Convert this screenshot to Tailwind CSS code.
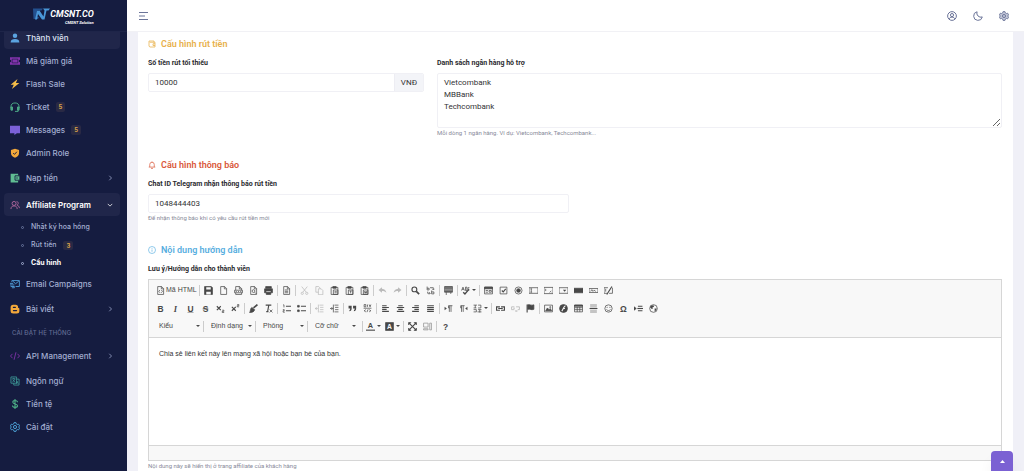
<!DOCTYPE html>
<html lang="vi">
<head>
  <meta charset="UTF-8" />
  <meta name="viewport" content="width=device-width, initial-scale=1.0" />
  <title>Affiliate Program - Cấu hình</title>
  <script src="https://cdn.jsdelivr.net/npm/@tailwindcss/browser@4"></script>
</head>
<body class="flex h-screen overflow-hidden bg-[#f0f0f7] font-['Roboto',sans-serif] text-[8px] text-[#333335]">

  <!-- Sidebar -->
  <aside class="flex w-[127px] shrink-0 flex-col overflow-hidden bg-[#151c40] font-['Inter',sans-serif] text-[8px] font-medium text-[#a3aed1]">
    <a href="#" class="relative z-10 flex h-8 shrink-0 justify-center border-b border-[#1e2549] bg-[#151c40] pt-2">
      <svg class="h-3 w-[17px]" viewBox="0 0 34 24">
        <path d="M0 1h20l-3 4h-7l-2 13h4l-2 4H1z" fill="#23508f"/>
        <path d="M8 6l5-1 8 12 2-12-3-4h14l-3 4h-4l-4 18h-5l-8-11-2 11H4z" fill="#4a97d8"/>
      </svg>
      <span class="font-['Roboto',sans-serif] font-bold text-white italic">
        <span class="block text-[9px] leading-[13px]">CMSNT.CO</span>
        <span class="block text-right text-[4px] leading-[4px]">CMSNT Solution</span>
      </span>
    </a>

    <nav class="-mt-[6px] flex flex-col pr-[7px] pl-1">
      <a href="#" class="flex h-[23px] items-center gap-[6px] rounded bg-[#20264a] pl-[6px] text-[#dfe3f3]">
        <svg class="size-[10px]" viewBox="0 0 16 16" fill="#5ba3e0"><circle cx="8" cy="4.500" r="3.600"/><path d="M1 15c0-4 3-5.500 7-5.500s7 1.500 7 5.500z"/></svg>
        Thành viên
      </a>
      <a href="#" class="flex h-[23px] items-center gap-[6px] pl-[6px]">
        <svg class="size-[10px]" viewBox="0 0 16 16" fill="#8333ad"><path d="M0 2h16v4a2 2 0 0 0 0 4v4H0v-4a2 2 0 0 0 0-4z"/><path d="M3.500 5h9v6h-9z" fill="none" stroke="#151c40"/></svg>
        Mã giảm giá
      </a>
      <a href="#" class="flex h-[23px] items-center gap-[6px] pl-[6px]">
        <svg class="size-[10px]" viewBox="0 0 16 16" fill="#f5bd49"><path d="M12 0L1 9h5L3 16 15 6.500H9.500z"/></svg>
        Flash Sale
      </a>
      <a href="#" class="flex h-[23px] items-center gap-[6px] pl-[6px]">
        <svg class="size-[10px]" viewBox="0 0 16 16" fill="none" stroke="#4ba585" stroke-width="1.600"><path d="M1.500 10V8a6.500 6.500 0 0 1 13 0v2"/><path d="M1.500 8h2.500v5H1.500zM12 8h2.500v5H12z" fill="#4ba585"/><path d="M13 13v2H8"/></svg>
        Ticket
        <span class="rounded-xs bg-[#292944] px-[3px] text-[6px] leading-[10px] font-bold text-[#d7a149]">5</span>
      </a>
      <a href="#" class="flex h-[23px] items-center gap-[6px] pl-[6px]">
        <svg class="size-[10px]" viewBox="0 0 16 16" fill="#7b61d8"><path d="M0 1h16v12h-5l-4 3v-3H0z"/></svg>
        Messages
        <span class="rounded-xs bg-[#292944] px-[3px] text-[6px] leading-[10px] font-bold text-[#d7a149]">5</span>
      </a>
      <a href="#" class="flex h-[23px] items-center gap-[6px] pl-[6px]">
        <svg class="size-[10px]" viewBox="0 0 16 16"><path d="M8 1l6.500 2v5c0 4-3 6-6.500 7.500C4.500 14 1.500 12 1.500 8V3z" fill="#f3a83b"/><path d="M5 8l2.200 2.200L11 6" fill="none" stroke="#151c40" stroke-width="1.500"/></svg>
        Admin Role
      </a>
      <a href="#" class="my-[2px] flex h-[23px] items-center gap-[6px] pr-[7px] pl-[6px]">
        <svg class="size-[10px]" viewBox="0 0 16 16"><path d="M1 1h12v3h2v8h-2v3H1z" fill="#60bd93"/><path d="M15.500 4.500H8v7h7.500M10 8h2.500" fill="none" stroke="#151c40" stroke-width="1.400"/></svg>
        Nạp tiền
        <svg class="ml-auto size-[6px]" viewBox="0 0 8 8" fill="none" stroke="#a3aed1"><path d="M3 1l3 3-3 3"/></svg>
      </a>
      <a href="#" class="my-[2px] flex h-[23px] items-center gap-[6px] rounded bg-[#20264a] pr-[7px] pl-[6px] font-semibold text-white">
        <svg class="size-[10px]" viewBox="0 0 16 16" fill="none" stroke="#b0659c" stroke-width="1.500"><circle cx="6.500" cy="5.500" r="3.200"/><path d="M1.500 14.500c0-3.500 2-5 5-5s5 1.500 5 5M10.500 2.500c3.500 0 3.500 5 .5 5.500 2.500 1 4 2.500 4 5"/></svg>
        Affiliate Program
        <svg class="ml-auto size-[6px]" viewBox="0 0 8 8" fill="none" stroke="#ffffff"><path d="M1 2.500l3 3 3-3"/></svg>
      </a>
      <a href="#" class="flex h-[18px] items-center gap-[7px] pl-[17px] text-[7px]">
        <span class="size-[3px] rounded-full border border-[#69749c]"></span>
        Nhật ký hoa hồng
      </a>
      <a href="#" class="flex h-[18px] items-center gap-[7px] pl-[17px] text-[7px]">
        <span class="size-[3px] rounded-full border border-[#69749c]"></span>
        Rút tiền
        <span class="rounded-xs bg-[#292944] px-[3px] text-[6px] leading-[9px] font-bold text-[#d7a149]">3</span>
      </a>
      <a href="#" class="flex h-[18px] items-center gap-[7px] pl-[17px] text-[7px] font-bold text-white">
        <span class="size-[3px] rounded-full border border-[#a3aed1]"></span>
        Cấu hình
      </a>
      <a href="#" class="flex h-[23px] items-center gap-[6px] pl-[6px]">
        <svg class="size-[10px]" viewBox="0 0 16 16" fill="none" stroke="#4f9ad6" stroke-width="1.500"><path d="M3 5V2.500h12V12H9"/><path d="M4.500 3.500L9 7.500l5-4M0 7h5M0 9.500h7M1 12h6v2H3" /></svg>
        Email Campaigns
      </a>
      <a href="#" class="my-[2px] flex h-[23px] items-center gap-[6px] pr-[7px] pl-[6px]">
        <svg class="size-[10px]" viewBox="0 0 16 16"><path d="M5 1h4a4 4 0 0 1 4 4v1.500h1a1.500 1.500 0 0 1 1 1.500v3a4 4 0 0 1-4 4H5a4 4 0 0 1-4-4V5a4 4 0 0 1 4-4z" fill="#f3a83b"/><path d="M5.500 5.500h3M5.500 10.500h5" stroke="#151c40" stroke-width="2" stroke-linecap="round"/></svg>
        Bài viết
        <svg class="ml-auto size-[6px]" viewBox="0 0 8 8" fill="none" stroke="#a3aed1"><path d="M3 1l3 3-3 3"/></svg>
      </a>
      <p class="flex h-5 items-center pl-2 text-[6px] tracking-wide text-[#636d94] uppercase">Cài đặt hệ thống</p>
      <a href="#" class="my-[2px] flex h-[23px] items-center gap-[6px] pr-[7px] pl-[6px]">
        <svg class="size-[10px]" viewBox="0 0 16 16" fill="none" stroke="#8333ad" stroke-width="1.400"><path d="M4 4.500L.8 8 4 11.500M12 4.500L15.200 8 12 11.500M9.500 2l-3 12"/></svg>
        API Management
        <svg class="ml-auto size-[6px]" viewBox="0 0 8 8" fill="none" stroke="#a3aed1"><path d="M3 1l3 3-3 3"/></svg>
      </a>
      <a href="#" class="flex h-[23px] items-center gap-[6px] pl-[6px]">
        <svg class="size-[10px]" viewBox="0 0 16 16" fill="none" stroke="#3f9c9a" stroke-width="1.300"><path d="M1.500 1.500h9v10h-9zM10.500 5h4v9.500H6v-3"/><path d="M3.500 4.500h5M6 3v1.500M8 4.500c-.5 2-2 3.500-4 4.500M4.500 6c1 1.500 2 2.500 3.500 3M10 12.500l1.500-4 1.500 4"/></svg>
        Ngôn ngữ
      </a>
      <a href="#" class="flex h-[23px] items-center gap-[6px] pl-[6px]">
        <svg class="size-[10px]" viewBox="0 0 16 16" fill="none" stroke="#4fb389" stroke-width="1.700"><path d="M12 5c0-2-2-2.500-4-2.500S4.500 3.500 4.500 5.200C4.500 9 12 7 12 10.800c0 1.700-1.800 2.700-4 2.700s-4-1-4-3M8 0v16"/></svg>
        Tiền tệ
      </a>
      <a href="#" class="flex h-[23px] items-center gap-[6px] pl-[6px]">
        <svg class="size-[10px]" viewBox="0 0 16 16" fill="none" stroke="#4fa8dc" stroke-width="1.500"><path d="M6.500 1h3l.6 2 1.700 1 2-.5 1.500 2.600L13.900 8l1.400 1.900-1.500 2.600-2-.5-1.700 1-.6 2h-3l-.6-2-1.700-1-2 .5L.7 9.900 2.100 8 .7 6.100l1.500-2.600 2 .5 1.700-1z"/><circle cx="8" cy="8" r="2.500"/></svg>
        Cài đặt
      </a>
    </nav>
  </aside>

  <div class="flex min-w-0 flex-1 flex-col">
    <!-- Topbar -->
    <header class="flex h-8 shrink-0 items-center border-b border-[#f1f1f5] bg-white pr-[15px] pl-3 text-[#6b7499]">
      <button aria-label="Menu">
        <svg class="h-[8px] w-[9px]" viewBox="0 0 9 8" fill="none" stroke="currentColor"><path d="M0 .5h9M0 4h6M0 7.500h9"/></svg>
      </button>
      <div class="ml-auto flex gap-4">
        <button aria-label="Tài khoản">
          <svg class="size-[10px]" viewBox="0 0 16 16" fill="none" stroke="currentColor" stroke-width="1.600"><circle cx="8" cy="8" r="7"/><circle cx="8" cy="6.500" r="2.500"/><path d="M3.500 13c.5-2.300 2-3.200 4.500-3.200s4 .9 4.500 3.200"/></svg>
        </button>
        <button aria-label="Giao diện tối">
          <svg class="size-[10px]" viewBox="0 0 16 16" fill="none" stroke="currentColor" stroke-width="1.600"><path d="M6.500 1.200A7 7 0 1 0 14.900 9.500 6.500 6.500 0 0 1 6.500 1.200z"/></svg>
        </button>
        <button aria-label="Thiết lập">
          <svg class="size-[10px]" viewBox="0 0 16 16" fill="#c3c7d8" stroke="currentColor" stroke-width="1.500"><path d="M6.500 1h3l.6 2 1.700 1 2-.5 1.500 2.600L13.900 8l1.400 1.900-1.500 2.600-2-.5-1.700 1-.6 2h-3l-.6-2-1.700-1-2 .5L.7 9.900 2.100 8 .7 6.100l1.500-2.600 2 .5 1.700-1z"/><circle cx="8" cy="8" r="2.500"/></svg>
        </button>
      </div>
    </header>

    <main class="flex-1 overflow-hidden px-[11px]">
      <form class="min-h-full bg-white pt-[5px] pr-[11px] pl-[10px]">
        <h2 class="flex items-center gap-[5px] text-[9px] leading-[14px] font-semibold text-[#e8b04a]">
          <svg class="size-2" viewBox="0 0 16 16" fill="none" stroke="currentColor" stroke-width="1.500"><path d="M2 2h10v2.500M2 2v10.500L4 14h10V4.500H3.500M14 7.500h-4v3.500h4"/></svg>
          Cấu hình rút tiền
        </h2>
        <div class="mt-[7px] grid grid-cols-3 gap-[13px]">
          <div>
            <label for="minAmount" class="block text-[7px] leading-[10px] font-bold text-[#2b2b30]">Số tiền rút tối thiểu</label>
            <div class="mt-[5px] flex h-[19px] overflow-hidden rounded-xs border border-[#f0f0f5]">
              <input id="minAmount" type="text" value="10000" class="min-w-0 flex-1 px-[6px] outline-none" />
              <span class="flex items-center border-l border-[#ededf3] bg-[#f3f4f8] px-[6px]">VNĐ</span>
            </div>
          </div>
          <div class="col-span-2">
            <label for="banks" class="block text-[7px] leading-[10px] font-bold text-[#2b2b30]">Danh sách ngân hàng hỗ trợ</label>
            <textarea id="banks" class="mt-[5px] block h-[55px] w-full resize-y overflow-hidden rounded-xs border border-[#f0f0f5] px-[6px] py-[3px] leading-[12px] outline-none">Vietcombank
MBBank
Techcombank</textarea>
            <p class="mt-px text-[6px] leading-[8px] text-[#878a99]">Mỗi dòng 1 ngân hàng. Ví dụ: Vietcombank, Techcombank...</p>
          </div>
        </div>

        <h2 class="mt-[21px] flex items-center gap-[5px] text-[9px] leading-[14px] font-semibold text-[#d9583a]">
          <svg class="size-2" viewBox="0 0 16 16" fill="none" stroke="currentColor" stroke-width="1.400"><path d="M3.500 12V7a4.500 4.500 0 0 1 9 0v5M1.500 12.200h13M6 14.800h4M8 1v1.500"/></svg>
          Cấu hình thông báo
        </h2>
        <div class="mt-[7px] grid grid-cols-2 gap-[13px]">
          <div>
            <label for="chatId" class="block text-[7px] leading-[10px] font-bold text-[#2b2b30]">Chat ID Telegram nhận thông báo rút tiền</label>
            <input id="chatId" type="text" value="1048444403" class="mt-[5px] block h-[19px] w-full rounded-xs border border-[#f0f0f5] px-[6px] outline-none" />
            <p class="mt-px text-[6px] leading-[8px] text-[#878a99]">Để nhận thông báo khi có yêu cầu rút tiền mới</p>
          </div>
        </div>

        <h2 class="mt-[21px] flex items-center gap-[5px] text-[9px] leading-[14px] font-semibold text-[#57aee0]">
          <svg class="size-2" viewBox="0 0 16 16" fill="none" stroke="currentColor" stroke-width="1.300"><circle cx="8" cy="8" r="7"/><path d="M8 7v4.500M8 4v1.500"/></svg>
          Nội dung hướng dẫn
        </h2>
        <label for="editor" class="mt-[7px] block text-[7px] leading-[10px] font-bold text-[#2b2b30]">Lưu ý/Hướng dẫn cho thành viên</label>

        <!-- Editor -->
        <div class="mt-[5px] border border-[#d6d6d6]">
          <div class="border-b border-[#d6d6d6] bg-[#f8f8f8] px-1 pt-px pb-[2px] font-['Liberation_Sans',sans-serif] text-[7px] text-[#484848]">
            <div id="row1" class="flex h-[18px] items-center"></div>
            <div id="row2" class="flex h-[18px] items-center"></div>
            <div class="flex h-[18px] items-center">
              <div id="combos" class="flex items-center"></div>
              <div id="row3" class="flex items-center"></div>
            </div>
          </div>
          <textarea id="editor" class="block h-[107px] w-full resize-none bg-white px-[10px] py-[10px] font-['Liberation_Sans',sans-serif] text-[7px] leading-[11px] outline-none">Chia sẻ liên kết này lên mạng xã hội hoặc bạn bè của bạn.</textarea>
          <div class="h-[15px] border-t border-[#d6d6d6] bg-[#f8f8f8]"></div>
        </div>
        <p class="mt-px text-[6px] leading-[8px] text-[#878a99]">Nội dung này sẽ hiển thị ở trang affiliate của khách hàng</p>
      </form>
    </main>
  </div>

  <button aria-label="Lên đầu trang" class="fixed right-[11px] bottom-0 flex h-5 w-[22px] items-center justify-center rounded-t bg-[#7b61d3] shadow-lg">
    <svg class="h-[3px] w-[5px]" viewBox="0 0 5 3" fill="#ffffff"><path d="M0 3L2.500 0 5 3z"/></svg>
  </button>

  <script>
    const page = '<path d="M3 1h7l3.500 3.500V15H3z"/><path d="M9.500 1v4h4"/>';
    const clip = '<path d="M2 2.500h12V15H2z"/><path d="M5 1h6v3H5z" fill="currentColor"/>';
    const glyph = (t, extra = "") => `<text x="8" y="13.500" text-anchor="middle" font-size="15" font-weight="bold" fill="currentColor" stroke="none" ${extra}>${t}</text>`;

    const icons = {
      source: page + '<path d="M7 7L5 9.500 7 12M9.500 7l2 2.500-2 2.500"/>',
      save: '<path d="M1 1h12l2 2v12H1z" fill="currentColor"/><path d="M4 2h8v4H4zM4 10h8v5H4z" fill="#f8f8f8" stroke="none"/>',
      newpage: page,
      pdf: page + '<path d="M1 7.500h14v4.500H1z" fill="#f8f8f8"/><path d="M3 9.800h2M7 9.800h2M11 9.800h2"/>',
      preview: page + '<circle cx="8" cy="9" r="2.500"/><path d="M10 11l3 3"/>',
      print: '<path d="M3 1h10v3H3zM1 5h14v7H1zM4 12h8v3H4z" fill="currentColor"/><path d="M4 10h8" stroke="#f8f8f8"/>',
      template: page + '<path d="M5 7h6M5 9.500h6M5 12h6"/>',
      cut: '<path d="M3 1l8 10M13 1L5 11"/><circle cx="4" cy="13" r="2"/><circle cx="12" cy="13" r="2"/>',
      copy: '<path d="M1.500 1h5L9 3.500V11H1.500z"/><path d="M6 5h5l3 3v7.500H6z" fill="#f8f8f8"/>',
      paste: clip + '<path d="M6 7h8v8H6zM8 9.500h4M8 12h4"/>',
      pastetext: clip + '<path d="M6 7h8v8H6zM8 9h4M10 9v4"/>',
      pasteword: clip + '<path d="M6 7h8v8H6zM8 9l1 4 1-3 1 3 1-4"/>',
      undo: '<path d="M7 2L1 7l6 5V9c4 0 6 1 8 3-1-4-3-6-8-7z" fill="currentColor" stroke="none"/>',
      redo: '<path d="M9 2l6 5-6 5V9c-4 0-6 1-8 3 1-4 3-6 8-7z" fill="currentColor" stroke="none"/>',
      find: '<circle cx="6" cy="6" r="4.300" stroke-width="2"/><path d="M9.500 9.500l5 5" stroke-width="3"/>',
      replace: '<path d="M2 1v6h3.500V4H2M10 8v6h4v-3.500h-4M7 3h6v3M11 5l2 2 2-2M3 10v3h4M5.500 11l2 2-2 2"/>',
      selectall: '<path d="M1 1h14v10H1z" fill="currentColor"/><path d="M1 3.500h14M1 6h14M1 8.500h14" stroke="#b5b5b5"/><path d="M4 11v5M12 11v3"/>',
      spell: '<path d="M1 8l2.500-6L6 8M2 6h3M8 2v6h2.500V2zM15 3h-2.500v4H15"/><path d="M4 11l3 3 7-8" stroke-width="2.500"/>',
      form: '<path d="M1 2h14v12H1z"/><path d="M1 2h14v3H1z" fill="currentColor"/><path d="M3 8h4M3 11h4M9 8h4v3H9z"/>',
      checkbox: '<path d="M2 2h12v12H2z"/><path d="M5 8l2.500 2.500L12 5" stroke-width="2"/>',
      radio: '<circle cx="8" cy="8" r="6.300"/><circle cx="8" cy="8" r="3.300" fill="currentColor"/>',
      textfield: '<path d="M0 3h16v10H0zM4 5v6M2.500 5h3M2.500 11h3"/>',
      textarea: '<path d="M0 2.500h16v11H0zM3 5v4M10 11.500l3-3M13 11.500V11"/>',
      select: '<path d="M0 3h16v10H0z"/><path d="M7 6.500h6L10 10z" fill="currentColor" stroke="none"/>',
      button: '<path d="M0 4h16v8H0z" fill="currentColor"/>',
      imgbutton: '<path d="M0 4.500h16v7H0z"/><path d="M3 9.500l2-3 2 3 2-2 3 2"/>',
      hidden: '<path d="M0 3h7M0 3v10h6M9 13h6V3"/><path d="M14 1L5 15" stroke-width="2"/><path d="M3 5v5"/>',
      bold: glyph("B"),
      italic: glyph("I", 'font-style="italic" font-family="Liberation Serif"'),
      underline: glyph("U", 'text-decoration="underline"'),
      strike: glyph("S", 'text-decoration="line-through"'),
      sub: '<path d="M1.500 4l7 7M8.500 4l-7 7" stroke-width="2"/><path d="M11 11h3v2h-3v2h3.500"/>',
      sup: '<path d="M1.500 5l7 7M8.500 5l-7 7" stroke-width="2"/><path d="M11 1h3v2h-3v2h3.500"/>',
      brush: '<path d="M15 1L8 7" stroke-width="3"/><path d="M5 6l5 4c-1 4-4 5-9 5 2-2 1-7 4-9z" fill="currentColor"/>',
      clear: '<path d="M3 2h10M8.500 2l-2 11M4 13.500h4" stroke-width="2"/><path d="M10 10l5 5M15 10l-5 5"/>',
      ol: '<path d="M7 4h9M7 12h9" stroke-width="2"/><path d="M2 1.500h1.500V6M1.500 10h2.500v2h-2v2.500h3"/>',
      ul: '<path d="M7 4h9M7 12h9" stroke-width="2"/><path d="M1 2.500h3v3H1zM1 10.500h3v3H1z" fill="currentColor"/>',
      outdent: '<path d="M8 2h7M9 6h6M9 10h6M8 14h7M6 1v14M5 8H0M3 5.500L.5 8 3 10.500"/>',
      indent: '<path d="M8 2h7M9 6h6M9 10h6M8 14h7M6 1v14M0 8h5M2.500 5.500L5 8l-2.500 2.500"/>',
      quote: '<path d="M1 3h5.500v5c0 3-1.500 4.500-4 5v-2c1-.5 1.500-1.500 1.500-3H1zM9 3h5.500v5c0 3-1.500 4.500-4 5v-2c1-.5 1.500-1.500 1.500-3H9z" fill="currentColor" stroke="none"/>',
      div: '<path d="M2 1h3v4H2zM8 1v4M11 1l1.500 4L14 1M1 7.500h14M5 10l-3 2 3 2M11 10l3 2-3 2M9 9.500l-2 5"/>',
      left: '<path d="M2 3h8M2 6.300h12M2 9.600h8M2 13h12" stroke-width="2"/>',
      center: '<path d="M4 3h8M1.500 6.300h13M4 9.600h8M1.500 13h13" stroke-width="2"/>',
      right: '<path d="M6 3h8M2 6.300h12M6 9.600h8M2 13h12" stroke-width="2"/>',
      justify: '<path d="M2 3h12M2 6.300h12M2 9.600h12M2 13h12" stroke-width="2"/>',
      ltr: '<path d="M1 5l4 3-4 3z" fill="currentColor" stroke="none"/><path d="M9.500 3v11M12.500 3v11M8 3h7M8 3v4h2"/>',
      rtl: '<path d="M15 5l-4 3 4 3z" fill="currentColor" stroke="none"/><path d="M4.500 3v11M7.500 3v11M3 3h7M3 3v4h2"/>',
      lang: '<path d="M1 2h6M4 2v5M1 7h5M9 2h5v5H9M1 10h5v4H1M9 10h6M12 10v5M8 14h7"/>',
      link: '<path d="M7 5H1v6h6M9 5h6v6H9M4 8h8" stroke-width="2"/>',
      unlink: '<path d="M6 5H1v5h5M9 5h6v5h-3M4 7.500h3M8 11l3 3M11 11l-3 3" stroke-width="1.500"/>',
      flag: '<path d="M2 1v14" stroke-width="2"/><path d="M3 1.500c4-1.500 6 2 11 0v8c-5 2-7-1.500-11 0z" fill="currentColor"/>',
      image: '<path d="M1 2h14v12H1z"/><path d="M3 12l3-5 3 3 2-2 2.500 4z" fill="currentColor"/><circle cx="11" cy="5.500" r="1"/>',
      flash: '<circle cx="8" cy="8" r="7" fill="currentColor"/><path d="M11.500 3C8 4 8.500 8 5 12.500M7 8h3.500" stroke="#f8f8f8" stroke-width="2"/>',
      table: '<path d="M1 2h14v12H1zM1 6.500h14M1 10h14M5.700 5v9M10.300 5v9"/><path d="M1 2h14v2H1z" fill="currentColor"/>',
      hr: '<path d="M2 0h12v6H2zM2 10h12v6H2z" fill="#c4c4c4" stroke="none"/><path d="M1 8h14" stroke-width="2"/>',
      smiley: '<circle cx="8" cy="8" r="6.500"/><path d="M5.500 5v2M10.500 5v2M4.500 9.500c1.500 3 5.500 3 7 0"/>',
      omega: glyph("Ω"),
      pagebreak: '<path d="M0 5l4 3-4 3z" fill="currentColor"/><path d="M7 4h8M7 12h8" stroke-width="2"/><path d="M6 8h10" stroke-width="2"/>',
      globe: '<circle cx="8" cy="8" r="6.800"/><path d="M3 3l5-1 1 3-3 1 1 2-2 1-3-3zM10 8l4 0-2 4-2 1z" fill="currentColor" stroke="none"/>',
      color: '<text x="8" y="11" text-anchor="middle" font-size="13" font-weight="bold" fill="currentColor" stroke="none">A</text><path d="M0 14.500h16" stroke-width="2"/>',
      bgcolor: '<path d="M1 1h14v14H1z" fill="currentColor"/><text x="8" y="12.500" text-anchor="middle" font-size="12" font-weight="bold" fill="#f8f8f8" stroke="none">A</text>',
      maximize: '<path d="M2 2l12 12M14 2L2 14" stroke-width="2"/><path d="M1 1h4L1 5zM15 1v4l-4-4zM1 15v-4l4 4zM15 15h-4l4-4z" fill="currentColor"/>',
      blocks: '<path d="M1 2h8v7H1zM12 2h3v12h-3zM1 12h8v2H1z" stroke="#909090"/>',
      help: glyph("?"),
    };

    // "|" is a separator, "~" marks a disabled button, "+" one with a menu arrow
    const rows = {
      row1: "source save newpage pdf preview print | template | ~cut ~copy paste pastetext pasteword | ~undo ~redo | find replace | selectall | +spell | form checkbox radio textfield textarea select button imgbutton hidden",
      row2: "bold italic underline strike sub sup | brush clear | ol ul | ~outdent indent | quote div | left center right justify | ltr rtl +lang | link ~unlink flag | image flash table hr smiley omega pagebreak globe",
      row3: "| +color +bgcolor | maximize blocks | help",
    };

    const separator = '<span class="mx-px h-[11px] w-px shrink-0 bg-[#cccccc]"></span>';
    const arrow = '<svg class="h-[2px] w-1 shrink-0" viewBox="0 0 4 2" fill="currentColor"><path d="M0 0h4L2 2z"/></svg>';

    function drawIcon(name) {
      return `<svg class="size-[9px] shrink-0" viewBox="0 0 16 16" fill="none" stroke="currentColor" stroke-width="1.300">${icons[name]}</svg>`;
    }

    function drawButton(item) {
      if (item === "|") return separator;
      const name = item.replace(/[~+]/, "");
      if (name === "source") {
        return `<button type="button" class="flex h-4 w-[45px] shrink-0 items-center gap-px pl-[3px] whitespace-nowrap">${drawIcon(name)}Mã HTML</button>${separator}`;
      }
      if (item.startsWith("+")) {
        return `<button type="button" aria-label="${name}" class="flex h-4 w-[19px] shrink-0 items-center justify-center gap-[2px]">${drawIcon(name)}${arrow}</button>`;
      }
      const tone = item.startsWith("~") ? "opacity-35" : "";
      return `<button type="button" aria-label="${name}" class="flex h-4 w-[15px] shrink-0 items-center justify-center ${tone}">${drawIcon(name)}</button>`;
    }

    for (const id in rows) {
      document.getElementById(id).innerHTML = rows[id].split(" ").map(drawButton).join("");
    }

    document.getElementById("combos").innerHTML = ["Kiểu", "Định dạng", "Phông", "Cỡ chữ"].map((label, i) => `
      ${i ? separator : ""}
      <span class="flex w-[49px] items-center pl-[6px]">
        <select aria-label="${label}" class="w-[37px] appearance-none bg-transparent outline-none"><option>${label}</option></select>
        ${arrow}
      </span>`).join("") + '<span class="w-[3px]"></span>';
  </script>
</body>
</html>
